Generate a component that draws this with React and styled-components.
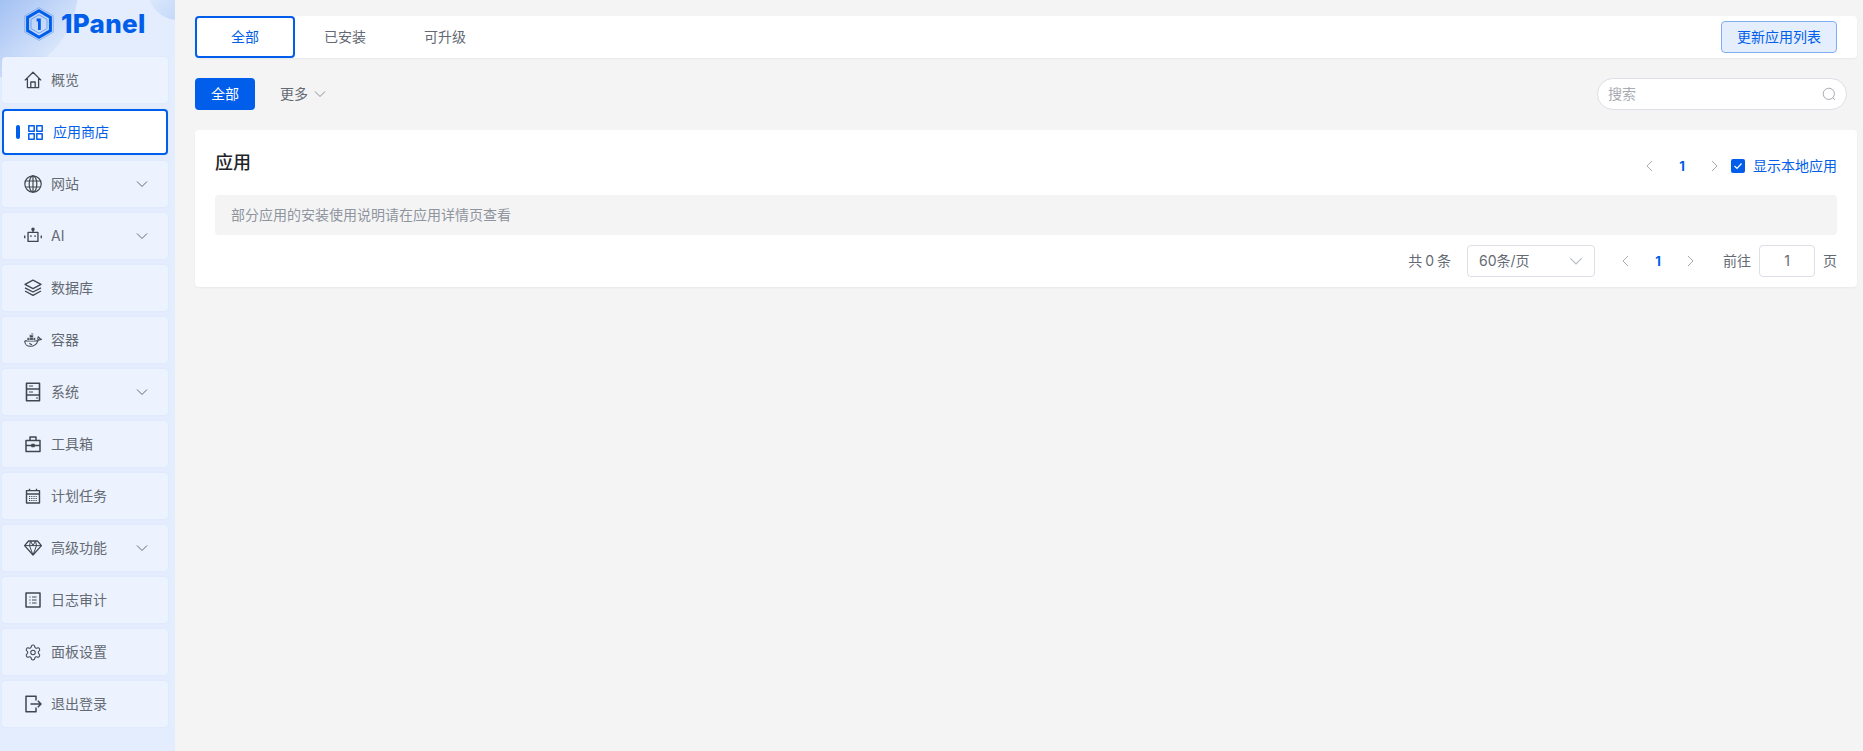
import React from "react";
import styled, { createGlobalStyle } from "styled-components";
import { Settings } from "lucide-react";

const PRIMARY = "#005eeb";

const Global = createGlobalStyle`
  html, body { margin: 0; padding: 0; height: 100%; overflow: hidden; }
  body {
    background: #f4f4f5;
    font-family: "Inter", "Noto Sans CJK SC", "Liberation Sans", sans-serif;
    font-size: 14px;
    line-height: 20px;
    color: #646a73;
  }
  * { box-sizing: border-box; }
`;

const Svg = ({ size = 18, h, children, w = 1.4 }) => (
  <svg width={size} height={h || size} viewBox={`0 0 ${size} ${h || size}`} fill="none" stroke="currentColor" strokeWidth={w} strokeLinejoin="round">
    {children}
  </svg>
);

const HomeIcon = () => (
  <Svg w={1.3}>
    <path d="M.8 9.4 9 1.2 17.2 9.4M3.4 7.4V16.6H14.6V7.4M6.8 16.6V11H11.2V16.6" />
  </Svg>
);
const AppsIcon = () => (
  <Svg size={15} w={1.5}>
    <path d="M.8.8H6.2V6.2H.8ZM8.8.8H14.2V6.2H8.8ZM.8 8.8H6.2V14.2H.8ZM8.8 8.8H14.2V14.2H8.8Z" />
  </Svg>
);
const GlobeIcon = () => (
  <Svg w={1.2}>
    <circle cx="9" cy="9" r="8.2" />
    <ellipse cx="9" cy="9" rx="3.8" ry="8.2" />
    <path d="M9 .8V17.2M1.6 6H16.4M1.6 12H16.4" />
  </Svg>
);
const RobotIcon = () => (
  <Svg size={20} w={1.5}>
    <path d="M4.5 6H15.5V16H4.5ZM10 6V3" />
    <circle cx="10" cy="2.4" r="1.2" fill="currentColor" />
    <path d="M.8 9.5V12.5M19.2 9.5V12.5" />
    <path d="M7 10.2H8.4M11.6 10.2H13" strokeWidth="1.8" />
  </Svg>
);
const LayersIcon = () => (
  <Svg w={1.3}>
    <path d="M9 1.2 17 5.4 9 9.6 1 5.4Z" />
    <path d="M1 8.8 9 13 17 8.8M1 12 9 16.4 17 12" />
  </Svg>
);
const DockerIcon = () => (
  <Svg size={20} h={16} w={1.2}>
    <path d="M.8 9H13.8C14.8 9 15.8 8.4 16.2 7.6 17.2 8 18.4 7.8 19.4 7.2 18.8 6.6 18.2 6.3 17.5 6.4 17.2 5.4 16.6 4.8 15.8 4.4 15.3 5.5 15.2 6.6 15.6 7.6" />
    <path d="M.8 9C.8 12.6 3.4 15 7 15 10.8 15 14 13 15.6 9" />
    <path d="M6 11.5C7 12.6 8 13 9 13" />
    <path d="M3.4 5.4H12.8V8.4H3.4ZM6 2.2H10.4V8.4H6ZM7.8.5H10.4V2.2H7.8Z" fill="currentColor" strokeWidth="0.6" stroke="#edf3fe" />
  </Svg>
);
const ServerIcon = () => (
  <Svg size={16} h={20} w={1.6}>
    <path d="M1.5 1.2H14.5V18.8H1.5ZM1.5 7H14.5M1.5 13H14.5" />
    <path d="M4 4H8M4 10H8M11 16H13" strokeWidth="1.2" />
  </Svg>
);
const ToolboxIcon = () => (
  <Svg w={1.5}>
    <path d="M2 5.5H16V16.5H2ZM2 10.5H16M6 5.5V2H12V5.5" />
    <path d="M7.5 9H10.5V12H7.5Z" fill="currentColor" strokeWidth="0.5" />
  </Svg>
);
const CalendarIcon = () => (
  <Svg size={16} w={1.4}>
    <path d="M1.5 2.6H14.5V15H1.5ZM1.5 6H14.5M4.5.8V2.6M11.5.8V2.6" />
    <path d="M4 8.5H12.5M4 10.5H12.5M4 12.5H12.5" strokeDasharray="1.2 1" strokeWidth="1.2" />
  </Svg>
);
const DiamondIcon = () => (
  <Svg w={1.3}>
    <path d="M4.5 2H13.5L17.4 6.6 9 16 .6 6.6Z" />
    <path d="M.6 6.6H17.4M6.5 2 5.5 6.6 9 16 12.5 6.6 11.5 2M6.5 2 9 6.6 11.5 2" strokeWidth="1" />
  </Svg>
);
const LogIcon = () => (
  <Svg size={16} w={1.5}>
    <path d="M1 1H15V15H1Z" />
    <path d="M4.4 5H5.6M7 5H11.6M4.4 8H5.6M7 8H11.6M4.4 11H5.6M7 11H11.6" strokeWidth="1.2" />
  </Svg>
);
const LogoutIcon = () => (
  <Svg w={1.5}>
    <path d="M12 5.5V1.2H2V16.8H12V12.5M6.5 9H17M13.8 5.8 17 9 13.8 12.2" />
  </Svg>
);
const Chevron = ({ dir = "down", size = 12 }) => {
  const d = { down: "M1 3.5 6 8.5 11 3.5", left: "M8 1 3 6 8 11", right: "M4 1 9 6 4 11" }[dir];
  return (
    <svg width={size} height={size} viewBox="0 0 12 12" fill="none" stroke="currentColor" strokeWidth="1">
      <path d={d} />
    </svg>
  );
};

const Logo = () => (
  <svg width="30" height="34" viewBox="0 0 30 34" fill="none">
    <path d="M15 .6 29.2 8.8V25.2L15 33.4.8 25.2V8.8Z" stroke="#6f9ff0" strokeWidth="0.7" />
    <path d="M15 3.8 26.4 10.4V23.6L15 30.2 3.6 23.6V10.4Z" stroke={PRIMARY} strokeWidth="3" />
    <path d="M15 7.8 23 12.4V21.6L15 26.2 7 21.6V12.4Z" stroke="#5a94f0" strokeWidth="0.8" />
    <path d="M12.6 11.5H16.8V23H14V14.4H12.6Z" fill={PRIMARY} />
  </svg>
);

const menu = [
  { label: "概览", icon: <HomeIcon /> },
  { label: "应用商店", icon: <AppsIcon />, active: true },
  { label: "网站", icon: <GlobeIcon />, more: true },
  { label: "AI", icon: <RobotIcon />, more: true },
  { label: "数据库", icon: <LayersIcon /> },
  { label: "容器", icon: <DockerIcon /> },
  { label: "系统", icon: <ServerIcon />, more: true },
  { label: "工具箱", icon: <ToolboxIcon /> },
  { label: "计划任务", icon: <CalendarIcon /> },
  { label: "高级功能", icon: <DiamondIcon />, more: true },
  { label: "日志审计", icon: <LogIcon /> },
  { label: "面板设置", icon: <Settings size={19} strokeWidth={1.4} /> },
  { label: "退出登录", icon: <LogoutIcon /> },
];

const App = () => (
  <>
    <Global />
    <Layout>
      <Sidebar>
        <BigBlob />
        <SmallBlob />
        <LogoRow>
          <Logo />
          <LogoText>1Panel</LogoText>
        </LogoRow>
        <Menu>
          {menu.map((m) => (
            <MenuItem key={m.label} $active={m.active}>
              {m.active && <ActiveMark />}
              <IconBox $active={m.active}>{m.icon}</IconBox>
              <MenuLabel $active={m.active}>{m.label}</MenuLabel>
              {m.more && (
                <MenuArrow>
                  <Chevron />
                </MenuArrow>
              )}
            </MenuItem>
          ))}
        </Menu>
      </Sidebar>
      <Main>
        <TabBar>
          <Tab $active>全部</Tab>
          <Tab>已安装</Tab>
          <Tab>可升级</Tab>
          <UpdateButton>更新应用列表</UpdateButton>
        </TabBar>
        <FilterRow>
          <FilterButton>全部</FilterButton>
          <MoreLink>
            更多
            <MoreArrow>
              <Chevron />
            </MoreArrow>
          </MoreLink>
          <Search>
            <SearchHint>搜索</SearchHint>
            <svg width="14" height="14" viewBox="0 0 14 14" fill="none" stroke="#a8abb2" strokeWidth="1">
              <circle cx="6.8" cy="6.8" r="5.6" />
              <path d="M10.8 10.8 13 13" />
            </svg>
          </Search>
        </FilterRow>
        <Card>
          <CardHeader>
            <CardTitle>应用</CardTitle>
            <Pager>
              <PagerArrow>
                <Chevron dir="left" />
              </PagerArrow>
              <PagerNum>1</PagerNum>
              <PagerArrow>
                <Chevron dir="right" />
              </PagerArrow>
            </Pager>
            <CheckLabel>
              <CheckBox>
                <svg width="14" height="14" viewBox="0 0 14 14" fill="none" stroke="#fff" strokeWidth="1.2">
                  <path d="M3.5 7 6 9.5 10.5 4.5" />
                </svg>
              </CheckBox>
              显示本地应用
            </CheckLabel>
          </CardHeader>
          <Notice>部分应用的安装使用说明请在应用详情页查看</Notice>
          <Footer>
            <Total>共 0 条</Total>
            <PageSize>
              60条/页
              <SelectArrow>
                <Chevron size={14} />
              </SelectArrow>
            </PageSize>
            <Pager>
              <PagerArrow>
                <Chevron dir="left" />
              </PagerArrow>
              <PagerNum>1</PagerNum>
              <PagerArrow>
                <Chevron dir="right" />
              </PagerArrow>
            </Pager>
            <Jump>前往</Jump>
            <JumpInput>1</JumpInput>
            <span>页</span>
          </Footer>
        </Card>
      </Main>
    </Layout>
  </>
);

export default App;

const Layout = styled.div`
  display: flex;
  height: 751px;
  overflow: hidden;
`;

const Sidebar = styled.aside`
  position: relative;
  flex: 0 0 175px;
  background: #e3edfd;
  overflow: hidden;
`;

const BigBlob = styled.div`
  position: absolute;
  left: -100px;
  top: -100px;
  width: 178px;
  height: 178px;
  border-radius: 50%;
  background: linear-gradient(135deg, #8fb3f0 45%, #dde9fc 88%);
`;

const SmallBlob = styled.div`
  position: absolute;
  left: 148px;
  top: -40px;
  width: 60px;
  height: 60px;
  border-radius: 50%;
  background: linear-gradient(135deg, #e3edfd 20%, #b5cef7 100%);
`;

const LogoRow = styled.div`
  position: relative;
  display: flex;
  align-items: center;
  height: 57px;
  padding: 0 0 9px 24px;
  gap: 7px;
`;

const LogoText = styled.span`
  font-family: "Inter", sans-serif;
  font-weight: 800;
  font-size: 26px;
  letter-spacing: 0.3px;
  line-height: 32px;
  color: ${PRIMARY};
`;

const Menu = styled.nav`
  position: relative;
  display: flex;
  flex-direction: column;
  gap: 6px;
  padding: 0 7px 0 2px;
`;

const MenuItem = styled.div`
  display: flex;
  align-items: center;
  height: 46px;
  padding-left: ${(p) => (p.$active ? "12px" : "22px")};
  border-radius: 4px;
  background: ${(p) => (p.$active ? "#fff" : "#edf3fe")};
  border: ${(p) => (p.$active ? `2px solid ${PRIMARY}` : "none")};
  color: ${(p) => (p.$active ? PRIMARY : "#646a73")};
  box-shadow: 0 0 3px rgba(0, 94, 235, 0.05);
`;

const ActiveMark = styled.span`
  width: 4px;
  height: 14px;
  border-radius: 2px;
  background: ${PRIMARY};
  margin-right: 8px;
  flex: none;
`;

const IconBox = styled.span`
  display: flex;
  align-items: center;
  justify-content: center;
  width: ${(p) => (p.$active ? "15px" : "18px")};
  height: 20px;
  color: ${(p) => (p.$active ? PRIMARY : "#42474f")};
  flex: none;
`;

const MenuLabel = styled.span`
  margin-left: ${(p) => (p.$active ? "10px" : "9px")};
  font-size: 14px;
  flex: 1;
`;

const MenuArrow = styled.span`
  display: flex;
  margin-right: 20px;
  color: #646a73;
`;

const Main = styled.main`
  flex: 1;
  min-width: 0;
  padding: 16px 6px 0 20px;
`;

const TabBar = styled.div`
  display: flex;
  align-items: center;
  height: 42px;
  padding-right: 20px;
  background: #fff;
  border-radius: 4px;
  box-shadow: 0 1px 2px rgba(0, 0, 0, 0.05);
`;

const Tab = styled.div`
  display: flex;
  align-items: center;
  justify-content: center;
  width: 100px;
  height: 42px;
  border-radius: 4px;
  border: ${(p) => (p.$active ? `2px solid ${PRIMARY}` : "none")};
  color: ${(p) => (p.$active ? PRIMARY : "#646a73")};
`;

const UpdateButton = styled.button`
  margin-left: auto;
  width: 116px;
  height: 32px;
  border: 1px solid #80aef5;
  border-radius: 4px;
  background: #e5eefd;
  color: ${PRIMARY};
  font: inherit;
  padding: 0;
`;

const FilterRow = styled.div`
  display: flex;
  align-items: center;
  height: 32px;
  margin-top: 20px;
  padding-right: 10px;
`;

const FilterButton = styled.button`
  width: 60px;
  height: 32px;
  border: none;
  border-radius: 4px;
  background: ${PRIMARY};
  color: #fff;
  font: inherit;
  padding: 0;
`;

const MoreLink = styled.div`
  display: flex;
  align-items: center;
  margin-left: 25px;
  color: #646a73;
`;

const MoreArrow = styled.span`
  display: flex;
  margin-left: 6px;
  color: #8a8f98;
`;

const Search = styled.div`
  display: flex;
  align-items: center;
  justify-content: space-between;
  width: 250px;
  height: 32px;
  margin-left: auto;
  padding: 0 10px;
  background: #fff;
  border: 1px solid #dcdfe6;
  border-radius: 16px;
`;

const SearchHint = styled.span`
  color: #a8abb2;
`;

const Card = styled.section`
  height: 157px;
  margin-top: 20px;
  padding: 20px;
  background: #fff;
  border-radius: 4px;
  box-shadow: 0 1px 2px rgba(0, 0, 0, 0.05);
`;

const CardHeader = styled.div`
  display: flex;
  align-items: center;
  height: 32px;
`;

const CardTitle = styled.div`
  font-size: 18px;
  font-weight: 500;
  line-height: 24px;
  color: #1f2329;
  margin-right: auto;
  margin-top: -7px;
`;

const Pager = styled.div`
  display: flex;
  align-items: center;
`;

const PagerArrow = styled.span`
  display: flex;
  align-items: center;
  justify-content: center;
  width: 32px;
  height: 32px;
  color: #a8abb2;
`;

const PagerNum = styled.span`
  display: block;
  width: 32px;
  text-align: center;
  font-size: 13px;
  font-weight: 700;
  color: ${PRIMARY};
`;

const CheckLabel = styled.label`
  display: flex;
  align-items: center;
  margin-left: 1px;
  color: ${PRIMARY};
`;

const CheckBox = styled.span`
  display: flex;
  width: 14px;
  height: 14px;
  margin-right: 8px;
  border-radius: 2px;
  background: ${PRIMARY};
`;

const Notice = styled.div`
  display: flex;
  align-items: center;
  height: 40px;
  margin-top: 13px;
  padding-left: 16px;
  background: #f4f4f5;
  border-radius: 4px;
  color: #8f959e;
`;

const Footer = styled.div`
  display: flex;
  align-items: center;
  justify-content: flex-end;
  height: 32px;
  margin-top: 10px;
`;

const Total = styled.span`
  margin-right: 16px;
  white-space: pre;
  word-spacing: -1px;
`;

const PageSize = styled.div`
  display: flex;
  align-items: center;
  width: 128px;
  height: 32px;
  padding-left: 11px;
  border: 1px solid #dcdfe6;
  border-radius: 4px;
  margin-right: 15px;
`;

const SelectArrow = styled.span`
  display: flex;
  margin-left: auto;
  margin-right: 11px;
  color: #b8bcc4;
`;

const Jump = styled.span`
  margin-left: 17px;
`;

const JumpInput = styled.div`
  display: flex;
  align-items: center;
  justify-content: center;
  width: 56px;
  height: 32px;
  margin: 0 8px;
  border: 1px solid #dcdfe6;
  border-radius: 4px;
`;
